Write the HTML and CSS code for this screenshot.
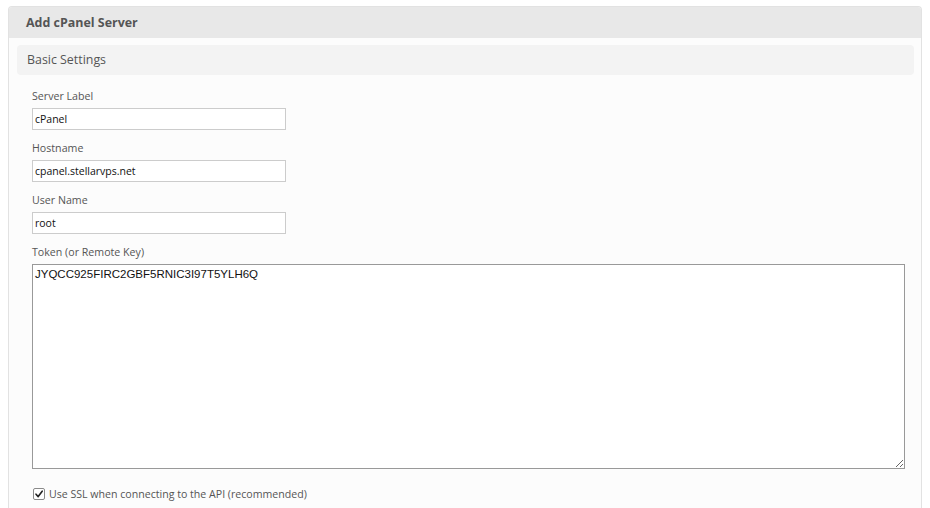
FILE: index.html
```html
<!DOCTYPE html>
<html>
<head>
<meta charset="utf-8">
<link rel="stylesheet" href="styles.css">
</head>
<body>
<div class="panel">
  <div class="panel-head">Add cPanel Server</div>
  <div class="panel-body">
    <div class="section-head">Basic Settings</div>
    <div class="fields">
      <div class="group">
        <label class="label">Server Label</label>
        <input class="input" type="text" value="cPanel">
      </div>
      <div class="group">
        <label class="label">Hostname</label>
        <input class="input" type="text" value="cpanel.stellarvps.net">
      </div>
      <div class="group">
        <label class="label">User Name</label>
        <input class="input" type="text" value="root">
      </div>
      <div class="group">
        <label class="label">Token (or Remote Key)</label>
        <textarea class="textarea">JYQCC925FIRC2GBF5RNIC3I97T5YLH6Q</textarea>
      </div>
      <label class="check">
        <span class="box"><svg width="10" height="10" viewBox="0 0 10 10"><path d="M2 5.2 L4.2 7.6 L8.2 2.2" fill="none" stroke="#222" stroke-width="1.6" stroke-linecap="round" stroke-linejoin="round"/></svg></span>
        <span>Use SSL when connecting to the API (recommended)</span>
      </label>
    </div>
  </div>
</div>
</body>
</html>
```

FILE: styles.css
```css
html, body {
  margin: 0;
  background: #ffffff;
}
body {
  padding: 6px 8px 0 8px;
  font-family: "Open Sans", "DejaVu Sans", sans-serif;
  color: #555555;
}
.panel {
  border: 1px solid #e2e2e2;
  border-bottom: none;
  border-radius: 4px 4px 0 0;
  overflow: hidden;
  height: 510px;
  background: #fcfcfc;
}
.panel-head {
  background: #e8e8e8;
  height: 31px;
  line-height: 31px;
  padding-left: 17px;
  font-size: 12.45px;
  font-weight: 700;
  color: #555555;
}
.panel-body {
  padding: 7px 7px 0 8px;
}
.section-head {
  background: #f3f3f3;
  border-radius: 4px;
  height: 30px;
  line-height: 30px;
  padding-left: 10px;
  font-size: 12.4px;
  color: #555555;
}
.fields {
  padding: 13px 9px 0 15px;
}
.group {
  display: flex;
  flex-direction: column;
  align-items: flex-start;
  gap: 4px;
  margin-bottom: 10px;
}
.label {
  font-size: 10.65px;
  line-height: 16px;
  color: #555555;
}
.input {
  box-sizing: border-box;
  width: 254px;
  height: 22px;
  margin: 0;
  border: 1px solid #cccccc;
  padding: 0 2px;
  font-family: "Open Sans", "DejaVu Sans", sans-serif;
  font-size: 10.5px;
  color: #111111;
  background: #ffffff;
  outline: none;
}
.textarea {
  box-sizing: border-box;
  width: 873px;
  height: 205px;
  margin: 0;
  border: 1px solid #999999;
  padding: 2px 2px;
  font-family: "Liberation Sans", Arial, sans-serif;
  font-size: 11.5px;
  line-height: 14px;
  color: #111111;
  background: #ffffff;
  resize: both;
  outline: none;
}
.check {
  display: flex;
  align-items: center;
  gap: 4px;
  margin-top: 17px;
  font-size: 10.6px;
  line-height: 16px;
  color: #555555;
}
.box {
  box-sizing: border-box;
  width: 12px;
  height: 12px;
  margin-left: 1px;
  border: 1px solid #8a8a8a;
  border-radius: 2px;
  background: #ffffff;
  display: flex;
  align-items: center;
  justify-content: center;
}
.box svg {
  display: block;
}
```
